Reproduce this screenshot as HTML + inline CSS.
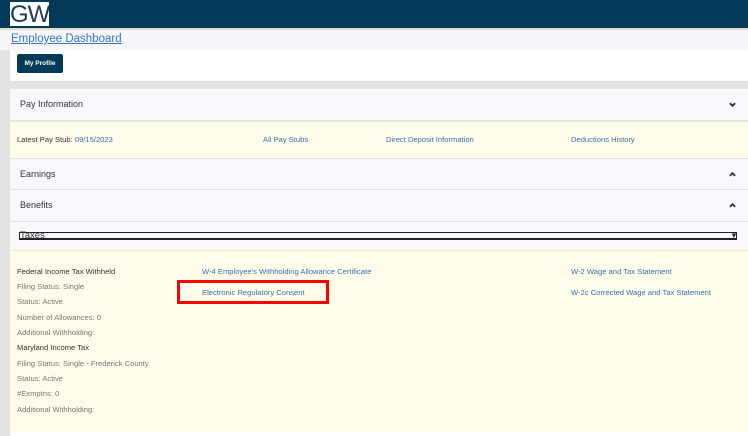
<!DOCTYPE html>
<html><head><meta charset="utf-8"><style>
*{margin:0;padding:0;box-sizing:border-box}
body{width:748px;height:436px;overflow:hidden;background:#fff;font-family:"Liberation Sans",sans-serif;position:relative;font-size:8px;color:#333}
.a{position:absolute}
.hdr{left:0;top:0;width:748px;height:28px;background:#033a59}
.logo{left:10px;top:2px;width:39px;height:24px;background:#fff;color:#1d3a5a;font-size:24px;font-weight:normal;line-height:25px;text-align:center;letter-spacing:-1px;font-family:"Liberation Sans",sans-serif;overflow:hidden}
.tan{left:0;top:28px;width:748px;height:2px;background:#e4dccb}
.sub{left:0;top:30px;width:748px;height:20px;background:#f7f8fb}
.dash{left:11px;top:33px;font-size:11.5px;color:#3474c3;text-decoration:underline}
.lg{left:0;top:50px;width:10px;height:386px;background:#e3e3e3}
.btn{left:17px;top:54px;width:46px;height:19px;background:#053a59;border-radius:2px;color:#fff;font-size:6.5px;font-weight:bold;text-align:center;line-height:19px}
.gb{left:10px;top:81px;width:738px;height:8px;background:#e3e3e3}
.hd{left:10px;width:738px;background:#f8f9fc;border-bottom:1px solid #e0e0e0}
.hd span{position:absolute;left:10px;font-size:9px;color:#333}
.yl{left:10px;width:738px;background:#fffde9;border-top:1px solid #efe9c6}
.chev{position:absolute;right:12px;width:7px;height:7px}
.t{position:absolute;font-size:7.6px;color:#777}
.t.b{color:#333}
.t.lk,.lk{color:#3a6fb0}
</style></head><body>
<div class="a hdr"></div>
<div class="a logo">GW</div>
<div class="a tan"></div>
<div class="a sub"></div>
<div class="a dash">Employee Dashboard</div>
<div class="a lg"></div>
<div class="a btn">My Profile</div>
<div class="a gb"></div>

<div class="a hd" style="top:89px;height:32px"><span style="top:10px">Pay Information</span>
<svg class="chev" style="top:12px" viewBox="0 0 8 8"><path d="M1 2.5L4 5.5L7 2.5" stroke="#333" stroke-width="2.1" fill="none"/></svg></div>
<div class="a yl" style="top:121px;height:37px">
<div class="t b" style="left:7px;top:13px">Latest Pay Stub: <span class="lk">09/15/2023</span></div>
<div class="t lk" style="left:253px;top:13px">All Pay Stubs</div>
<div class="t lk" style="left:376px;top:13px">Direct Deposit Information</div>
<div class="t lk" style="left:561px;top:13px">Deductions History</div>
</div>
<div class="a hd" style="top:158px;height:32px;border-top:1px solid #e0e0e0"><span style="top:10px">Earnings</span>
<svg class="chev" style="top:12px" viewBox="0 0 8 8"><path d="M1 5.5L4 2.5L7 5.5" stroke="#333" stroke-width="2.1" fill="none"/></svg></div>
<div class="a hd" style="top:190px;height:32px"><span style="top:10px">Benefits</span>
<svg class="chev" style="top:12px" viewBox="0 0 8 8"><path d="M1 5.5L4 2.5L7 5.5" stroke="#333" stroke-width="2.1" fill="none"/></svg></div>
<div class="a" style="left:10px;top:222px;width:738px;height:28px;background:#f8f9fc"></div>
<div class="a" style="left:19px;top:232px;width:718px;height:8px;border:1px solid #222;border-bottom-width:2px"></div>
<div class="a" style="left:20px;top:230px;font-size:9.5px;color:#333;line-height:11px">Taxes</div>
<div class="a" style="left:730px;top:231px;font-size:8px;color:#333">&#9660;</div>

<div class="a yl" style="top:250px;height:182px">
<div class="t b" style="left:7px;top:16px">Federal Income Tax Withheld</div>
<div class="t" style="left:7px;top:31px">Filing Status: Single</div>
<div class="t" style="left:7px;top:46px">Status: Active</div>
<div class="t" style="left:7px;top:62px">Number of Allowances: 0</div>
<div class="t" style="left:7px;top:77px">Additional Withholding:</div>
<div class="t b" style="left:7px;top:92px">Maryland Income Tax</div>
<div class="t" style="left:7px;top:108px">Filing Status: Single - Frederick County</div>
<div class="t" style="left:7px;top:123px">Status: Active</div>
<div class="t" style="left:7px;top:138px">#Exmptns: 0</div>
<div class="t" style="left:7px;top:154px">Additional Withholding:</div>
<div class="t lk" style="left:192px;top:16px">W-4 Employee's Withholding Allowance Certificate</div>
<div class="t lk" style="left:192px;top:37px">Electronic Regulatory Consent</div>
<div class="t lk" style="left:561px;top:16px">W-2 Wage and Tax Statement</div>
<div class="t lk" style="left:561px;top:37px">W-2c Corrected Wage and Tax Statement</div>
</div>
<div class="a" style="left:177px;top:280px;width:152px;height:24px;border:3px solid #f00"></div>
</body></html>
